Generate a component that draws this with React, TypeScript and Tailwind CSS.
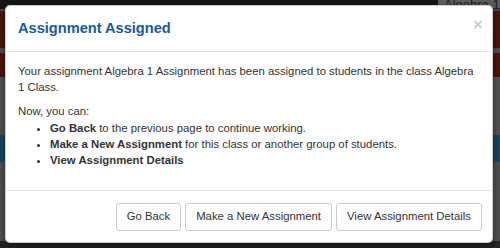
import React from "react";

const font = { fontFamily: '"Liberation Sans", Arial, Helvetica, sans-serif' };

function Backdrop() {
  return (
    <div className="flex flex-col w-full h-full">
      <div className="h-[9px] bg-[#161616] flex justify-end">
        <div className="w-[62px] h-[9px] bg-[#5e5e5e] text-[13px] leading-[9px] text-[#1e1e1e] pl-[6px] overflow-hidden">
          Algebra 1
        </div>
      </div>
      <div className="h-[2px] bg-[#4a4a4a]" />
      <div className="h-[37px] bg-[#4b160e]" />
      <div className="h-[5px] bg-[#4f4f4f]" />
      <div className="h-[24px] bg-[#4b160e]" />
      <div className="h-[58px] bg-[#545454]" />
      <div className="h-[27px] bg-[#1b4661]" />
      <div className="h-[79px] bg-[#505050]" />
      <div className="flex-1 bg-[#262626]" />
    </div>
  );
}

export default function App() {
  return (
    <div className="relative w-[500px] h-[248px] overflow-hidden" style={font}>
      <Backdrop />

      {/* modal */}
      <div className="absolute left-[5px] top-[5px] w-[488px] bg-white border border-black/20 rounded-[5px] shadow-[0_3px_8px_rgba(0,0,0,0.5)] text-[#333]">
        <div className="relative px-[12px] pt-[12px] pb-[12px] border-b border-[#e5e5e5]">
          <h4 className="text-[14.6px] leading-[21px] font-bold text-[#1657a8]">Assignment Assigned</h4>
          <button className="absolute right-[9px] top-[10px] text-[17px] leading-[17px] font-bold text-black opacity-20">
            ×
          </button>
        </div>

        <div className="px-[12px] pt-[11px] pb-[14px] text-[11.35px] leading-[16.2px]">
          <p className="mb-[8px]">
            Your assignment Algebra 1 Assignment has been assigned to students in the class Algebra 1 Class.
          </p>
          <p>Now, you can:</p>
          <ul className="list-disc pl-[32px] mb-[8px]">
            <li>
              <b>Go Back</b> to the previous page to continue working.
            </li>
            <li>
              <b>Make a New Assignment</b> for this class or another group of students.
            </li>
            <li>
              <b>View Assignment Details</b>
            </li>
          </ul>
        </div>

        <div className="flex justify-end gap-[4px] pl-[12px] pr-[10px] pt-[12px] pb-[11px] border-t border-[#e5e5e5]">
          <button className="h-[27.5px] px-[10px] text-[11.35px] text-[#333] bg-white border border-[#ccc] rounded-[3px]">
            Go Back
          </button>
          <button className="h-[27.5px] px-[10px] text-[11.35px] text-[#333] bg-white border border-[#ccc] rounded-[3px]">
            Make a New Assignment
          </button>
          <button className="h-[27.5px] px-[10px] text-[11.35px] text-[#333] bg-white border border-[#ccc] rounded-[3px]">
            View Assignment Details
          </button>
        </div>
      </div>
    </div>
  );
}
